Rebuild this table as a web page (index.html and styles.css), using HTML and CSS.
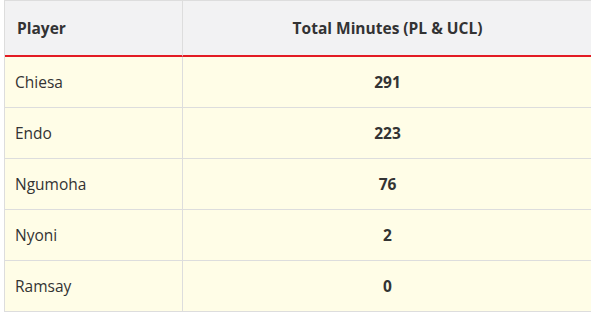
FILE: index.html
```html
<!DOCTYPE html>
<html lang="en">
<head>
<meta charset="utf-8">
<title>Total Minutes</title>
<link rel="stylesheet" href="styles.css">
</head>
<body>
<div class="page">
  <table class="minutes">
    <thead>
      <tr>
        <th class="col-player">Player</th>
        <th class="col-total">Total Minutes (PL &amp; UCL)</th>
      </tr>
    </thead>
    <tbody>
      <tr><td class="name">Chiesa</td><td class="num">291</td></tr>
      <tr><td class="name">Endo</td><td class="num">223</td></tr>
      <tr><td class="name">Ngumoha</td><td class="num">76</td></tr>
      <tr><td class="name">Nyoni</td><td class="num">2</td></tr>
      <tr><td class="name">Ramsay</td><td class="num">0</td></tr>
    </tbody>
  </table>
</div>
</body>
</html>
```

FILE: styles.css
```css
html, body {
  margin: 0;
  padding: 0;
  background: #ffffff;
}

.page {
  padding-left: 4px;
  font-family: "Open Sans", "Noto Sans", "DejaVu Sans", sans-serif;
  color: #333333;
}

.minutes {
  border-collapse: separate;
  border-spacing: 0;
  width: 589px;
  border-top: 1px solid #dddddd;
  border-left: 1px solid #dddddd;
}

.minutes th,
.minutes td {
  border-right: 1px solid #dddddd;
  border-bottom: 1px solid #dddddd;
  line-height: 20px;
}

.minutes th {
  background: #f2f2f3;
  border-bottom: 2px solid #e31b23;
  padding: 17px 12px;
  font-size: 15.5px;
  font-weight: 700;
  text-align: center;
}

.minutes th.col-player {
  width: 153px;
  text-align: left;
}

.minutes td {
  background: #fffde7;
  padding: 15px 10px;
  font-size: 15.5px;
}

.minutes td.num {
  text-align: center;
  font-weight: 700;
}
```
